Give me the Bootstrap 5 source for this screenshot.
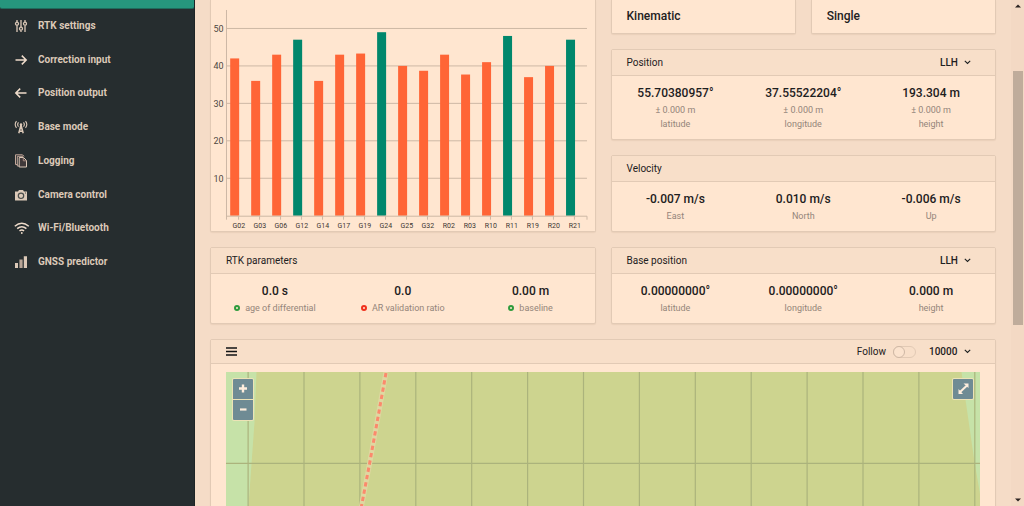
<!DOCTYPE html>
<html lang="en">
<head>
<meta charset="utf-8">
<meta name="viewport" content="width=device-width, initial-scale=1">
<title>ReachView – Status</title>
<link href="https://cdn.jsdelivr.net/npm/bootstrap@5.3.0/dist/css/bootstrap.min.css" rel="stylesheet">
<style>
:root { --line: #e2cab5; --panel: #ffe6d0; --page: #f5dcc7; --head: #f8dfc9; --ink: #1d2021; }
body { font-family: Roboto, "Liberation Sans", sans-serif; font-size: 10px; line-height: 14px; color: var(--ink); background: var(--page); }
.sidebar { width: 195px; background: #262d2f; border-right: 1px solid #1d2425; }
.side-current { height: 9px; background: #26967d; border-bottom: 1px solid #1f6b5c; border-radius: 0 0 2px 2px; }
.side-menu { display: grid; grid-auto-rows: 1fr; height: 270px; }
.side-menu a { color: #dcc9b8; font-weight: 700; padding-left: 14px; gap: 10px; }
.side-menu svg { width: 14px; height: 14px; flex: none; }
.content-area { padding: 0 15px; }
.columns, .halves { display: grid; grid-template-columns: 1fr 1fr; gap: 15px; }
.stack { display: grid; gap: 15px; }
.panel { background: var(--panel); border: 1px solid var(--line); border-radius: 2px; box-shadow: 0 1px 1px rgba(120,80,40,.08); }
.panel-cut { border-top: 0; border-radius: 0 0 2px 2px; }
.panel-head { height: 26px; padding: 0 24px 0 15px; background: var(--head); border-bottom: 1px solid var(--line); }
.panel-head h2 { font-size: 10px; line-height: 14px; font-weight: 400; margin: 0; }
.map-panel { margin-top: 15px; }
.map-head { height: 24px; }
.panel-values { display: grid; grid-template-columns: repeat(3, 1fr); padding: 8px 0; text-align: center; }
.value { font-size: 12px; line-height: 18px; font-weight: 500; margin-bottom: 1px; }
.note { font-size: 9px; line-height: 14px; color: #94857a; }
.mode { height: 34px; padding: 7px 15px 0; font-size: 12px; line-height: 18px; font-weight: 500; }
.dot { display: inline-block; width: 6px; height: 6px; border-radius: 50%; border: 2px solid #2e9b3c; margin-right: 5px; }
.dot-bad { border-color: #f0301c; }
.pick { appearance: none; border: 0; padding: 0 13px 0 0; font-size: 10px; line-height: 14px; font-weight: 500; color: var(--ink);
  background: transparent url("data:image/svg+xml,%3Csvg xmlns='http://www.w3.org/2000/svg' width='7' height='5'%3E%3Cpath d='M.8.9 3.5 3.5 6.2.9' fill='none' stroke='%231d2021' stroke-width='1.1'/%3E%3C/svg%3E") no-repeat right center; }
.follow { appearance: none; width: 23px; height: 12px; margin: 0 13px 0 7px; border: 1px solid var(--line); border-radius: 6px; background: var(--head); }
.follow::before { content: ""; display: block; width: 12px; height: 12px; margin: -1px; border: 1px solid #cfb8a5; border-radius: 50%; background: #fbe3ce; }
.follow:checked { background: #26967d; }
.follow:checked::before { margin-left: 10px; }
.bare { border: 0; background: none; padding: 0; line-height: 0; }
.chart { display: block; width: 100%; }
.map-wrap { margin: 8px 15px 15px; }
.map-wrap > svg { display: block; width: 100%; height: 400px; }
.map-tool { width: 20px; background: #6f8b94; box-shadow: 0 0 0 1px #ede3b6; border-radius: 1px; }
.map-btn { display: block; width: 20px; height: 20px; border: 0; padding: 0; background: none; line-height: 0; }
.map-btn + .map-btn { border-top: 1px solid #ede3b6; height: 21px; }
.tool-left { top: 7px; left: 7px; }
.tool-right { top: 7px; right: 7px; }
.scroll-rail { width: 13px; background: #f3d9c4; line-height: 0; padding: 4px 0; }
.scroll-thumb { width: 10px; background: #bfac9b; }
</style>
</head>
<body>
<div class="d-flex vh-100 overflow-hidden">
  <nav class="sidebar flex-shrink-0" aria-label="Main">
    <div class="side-current"></div>
    <div class="side-menu">
      <a href="#" class="d-flex align-items-center text-decoration-none">
        <svg viewBox="0 0 14 14" fill="none" stroke="#dcc9b8" stroke-width="1.3"><path d="M3 1v2M3 6.500v6.500M7 1v7M7 11.500v1.500M11 1v2M11 6.500v6.500"/><circle cx="3" cy="4.700" r="1.500"/><circle cx="7" cy="9.700" r="1.500"/><circle cx="11" cy="4.700" r="1.500"/></svg>RTK settings</a>
      <a href="#" class="d-flex align-items-center text-decoration-none">
        <svg viewBox="0 0 14 14" fill="none" stroke="#efdccb" stroke-width="1.5"><path d="M1.500 7h10.500M7.800 2.600 12.200 7 7.800 11.400"/></svg>Correction input</a>
      <a href="#" class="d-flex align-items-center text-decoration-none">
        <svg viewBox="0 0 14 14" fill="none" stroke="#efdccb" stroke-width="1.500"><path d="M12.500 7H2M6.200 2.600 1.800 7l4.400 4.400"/></svg>Position output</a>
      <a href="#" class="d-flex align-items-center text-decoration-none">
        <svg viewBox="0 0 14 14" fill="none" stroke="#dcc9b8" stroke-width="1.100"><path d="M2.500 1.200q-2.600 3.300 0 6.600M4.500 2.300q-1.700 2.200 0 4.400M11.500 1.200q2.600 3.300 0 6.600M9.500 2.300q1.700 2.200 0 4.400"/><circle cx="7" cy="4.500" r="1.200" fill="#dcc9b8" stroke="none"/><path d="M7 5 4.800 13.300M7 5l2.200 8.300M6 8.500h2M5.200 11.200h3.600" stroke-width="1.500"/></svg>Base mode</a>
      <a href="#" class="d-flex align-items-center text-decoration-none">
        <svg viewBox="0 0 14 14" fill="none" stroke-width="1"><path d="M3.500 10.500H1.500V.8H8.500L10 2.300M5 12H3.300V2.300h6" stroke="#c3a79a"/><path d="M5.200 3.500h4.300l3 3v6.500H5.200z" fill="#40393a" stroke="#dcc9b8"/><path d="M9.300 3.800v3h3" stroke="#a98e84"/></svg>Logging</a>
      <a href="#" class="d-flex align-items-center text-decoration-none">
        <svg viewBox="0 0 14 14"><path fill="#dcc9b8" d="M1 3.500h3L5 2h4l1 1.500h3V12.500H1z"/><circle cx="7" cy="7.800" r="2.700" fill="none" stroke="#4a4d4b" stroke-width="1.200"/><path d="M11 5h1" stroke="#4a4d4b"/></svg>Camera control</a>
      <a href="#" class="d-flex align-items-center text-decoration-none">
        <svg viewBox="0 0 14 14" overflow="visible" fill="none" stroke="#efdccb" stroke-width="1.500"><path d="M.8 5.300q7-6 14 0M3.200 7.700q4.600-3.800 9.200 0M5.500 10q2.300-1.800 4.600 0"/><circle cx="7.800" cy="12" r=".9" fill="#efdccb" stroke="none"/></svg>Wi-Fi/Bluetooth</a>
      <a href="#" class="d-flex align-items-center text-decoration-none">
        <svg viewBox="0 0 14 14" fill="#dcc9b8"><path d="M1 8h3v5H1zM9.800 1.300H13V13H9.800z"/><path d="M5.400 4.500h3.200V13H5.400z" fill="#b9a597"/></svg>GNSS predictor</a>
    </div>
  </nav>

  <main class="content-area flex-grow-1 overflow-hidden">
    <div class="columns">
      <section class="panel panel-cut">
        <svg class="chart" id="snr" viewBox="0 0 384 230" role="img" aria-label="Satellite signal levels"></svg>
      </section>
      <div class="stack">
        <div class="halves">
          <section class="panel panel-cut mode">Kinematic</section>
          <section class="panel panel-cut mode">Single</section>
        </div>
        <section class="panel">
          <header class="panel-head d-flex align-items-center justify-content-between">
            <h2>Position</h2>
            <select class="pick" aria-label="Position format"><option>LLH</option></select>
          </header>
          <div class="panel-values">
            <div><div class="value">55.70380957°</div><div class="note">± 0.000 m</div><div class="note">latitude</div></div>
            <div><div class="value">37.55522204°</div><div class="note">± 0.000 m</div><div class="note">longitude</div></div>
            <div><div class="value">193.304 m</div><div class="note">± 0.000 m</div><div class="note">height</div></div>
          </div>
        </section>
        <section class="panel">
          <header class="panel-head d-flex align-items-center"><h2>Velocity</h2></header>
          <div class="panel-values">
            <div><div class="value">-0.007 m/s</div><div class="note">East</div></div>
            <div><div class="value">0.010 m/s</div><div class="note">North</div></div>
            <div><div class="value">-0.006 m/s</div><div class="note">Up</div></div>
          </div>
        </section>
      </div>
      <section class="panel">
        <header class="panel-head d-flex align-items-center"><h2>RTK parameters</h2></header>
        <div class="panel-values">
          <div><div class="value">0.0 s</div><div class="note"><span class="dot"></span>age of differential</div></div>
          <div><div class="value">0.0</div><div class="note"><span class="dot dot-bad"></span>AR validation ratio</div></div>
          <div><div class="value">0.00 m</div><div class="note"><span class="dot"></span>baseline</div></div>
        </div>
      </section>
      <section class="panel">
        <header class="panel-head d-flex align-items-center justify-content-between">
          <h2>Base position</h2>
          <select class="pick" aria-label="Base position format"><option>LLH</option></select>
        </header>
        <div class="panel-values">
          <div><div class="value">0.00000000°</div><div class="note">latitude</div></div>
          <div><div class="value">0.00000000°</div><div class="note">longitude</div></div>
          <div><div class="value">0.000 m</div><div class="note">height</div></div>
        </div>
      </section>
    </div>

    <section class="panel map-panel">
      <header class="panel-head map-head d-flex align-items-center">
        <button class="bare me-auto" type="button" aria-label="Map layers">
          <svg width="11" height="9" viewBox="0 0 11 9" stroke="#101314" stroke-width="1.600"><path d="M0 1h11M0 4.500h11M0 8h11"/></svg>
        </button>
        <label for="follow">Follow</label>
        <input class="follow" type="checkbox" role="switch" id="follow">
        <select class="pick" aria-label="Number of points"><option>10000</option></select>
      </header>
      <div class="map-wrap position-relative">
        <svg viewBox="0 0 755 400" preserveAspectRatio="xMidYMin slice" role="img" aria-label="Map">
          <rect width="755" height="400" fill="#cdd48f"/>
          <path d="M0 0h31L29 50 23 134 10 400H0z" fill="#c6e2a8"/>
          <path d="M736 0h19V125L749 90z" fill="#c6e2a8"/>
          <path id="grid" fill="none" stroke="#abb37c" stroke-width="1.200"/>
          <path d="M160.500 0 144 92 136 134 90 400" fill="none" stroke="#dfd7a1" stroke-width="5"/>
          <path d="M160.500 1 144 92 136 134 90 400" fill="none" stroke="#fb8a6c" stroke-width="3" stroke-dasharray="4.300 3.100"/>
        </svg>
        <div class="map-tool tool-left position-absolute">
          <button class="map-btn" type="button" aria-label="Zoom in"><svg width="20" height="20" stroke="#ffeedd" stroke-width="2.400"><path d="M6 9.500h8M10 5.500v8"/></svg></button>
          <button class="map-btn" type="button" aria-label="Zoom out"><svg width="20" height="20" stroke="#ffeedd" stroke-width="2.200"><path d="M7 9.500h6.500"/></svg></button>
        </div>
        <div class="map-tool tool-right position-absolute">
          <button class="map-btn" type="button" aria-label="Full screen"><svg width="20" height="20" fill="#ffeedd" stroke="#ffeedd"><path d="M7 13 14 6.500" stroke-width="2"/><path d="M10.500 4.500H15.500V9zM5.500 10v5H10z" stroke="none"/></svg></button>
        </div>
      </div>
    </section>
  </main>

  <div class="scroll-rail flex-shrink-0 d-flex flex-column align-items-center" aria-hidden="true">
    <svg width="6" height="4"><path d="M0 3.500 3 .5l3 3z" fill="#2b2320"/></svg>
    <div style="flex:63 0 0"></div>
    <div class="scroll-thumb" style="flex:254 0 0"></div>
    <div style="flex:173 0 0"></div>
    <svg width="6" height="4"><path d="M0 .5h6l-3 3z" fill="#2b2320"/></svg>
  </div>
</div>
<script src="https://cdn.jsdelivr.net/npm/bootstrap@5.3.0/dist/js/bootstrap.bundle.min.js"></script>
<script>
const sats = [["G02",42],["G03",36],["G06",43],["G12",47,1],["G14",36],["G17",43],["G19",43.3],["G24",49,1],["G25",40],["G32",38.7],["R02",43],["R03",37.7],["R10",41],["R11",48,1],["R19",37],["R20",40],["R21",47,1]];
const base = 216, unit = 3.75;
let s = "";
for (let v = 10; v <= 50; v += 10) {
  const y = base - v * unit;
  s += `<path d="M15 ${y}H376.500" stroke="#cdb8a5"/><text x="12.500" y="${y + 3.5}" text-anchor="end" font-size="9" fill="#4d4641">${v}</text>`;
}
sats.forEach(([name, v, used], i) => {
  const x = 19.2 + i * 21.02;
  s += `<rect x="${x}" y="${base - v * unit}" width="9" height="${v * unit}" fill="${used ? "#00876c" : "#ff6536"}"/>`;
  s += `<path d="M${x + 8.4} 216v4" stroke="#cdb8a5"/><text x="${x + 8.7}" y="228" text-anchor="middle" font-size="7" fill="#3c3733">${name}</text>`;
});
s += `<path d="M15.500 10V220M15 216.500H376.500V220" fill="none" stroke="#cdb8a5"/>`;
document.getElementById("snr").innerHTML = s;
let g = "M0 91.300H755";
for (let i = 0; i < 14; i++) g += `M${22.6 + i * 55.9} 0V400`;
document.getElementById("grid").setAttribute("d", g);
</script>
</body>
</html>
